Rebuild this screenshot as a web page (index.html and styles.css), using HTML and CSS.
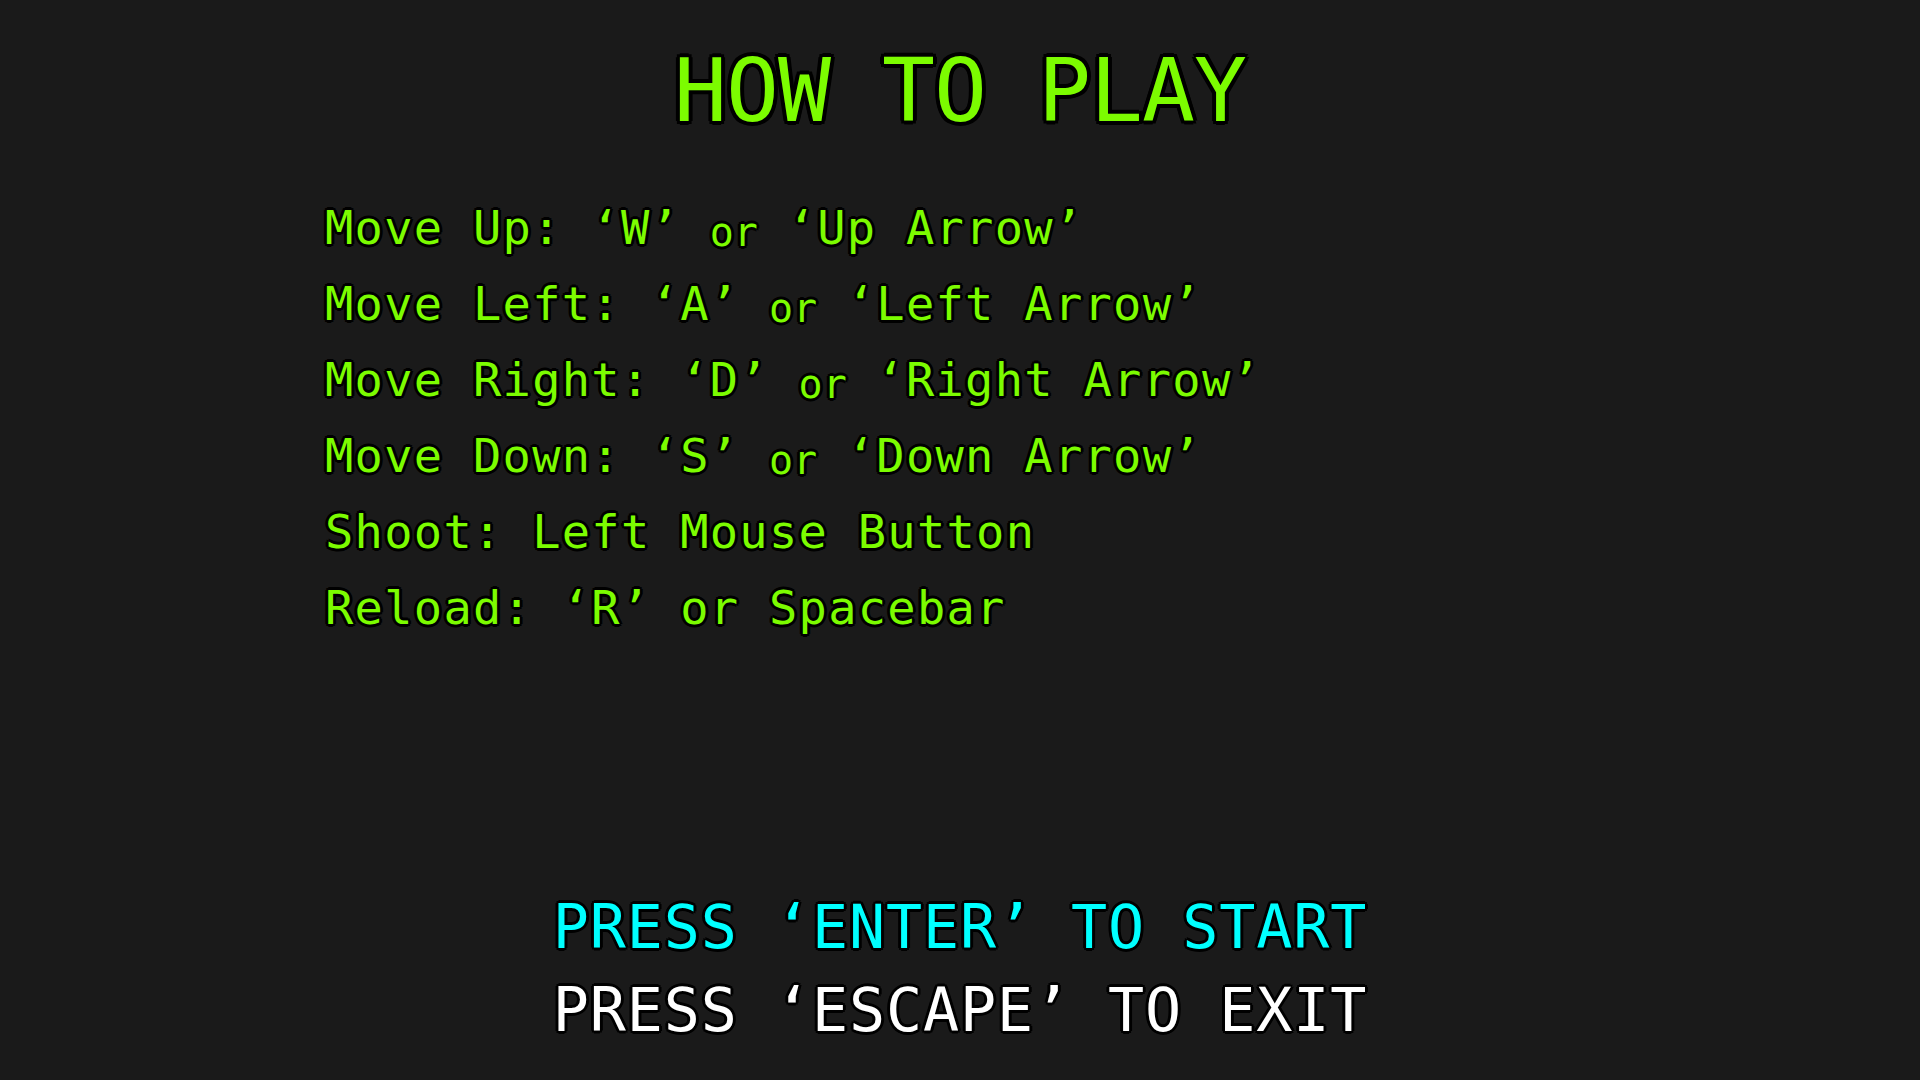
FILE: index.html
```html
<!DOCTYPE html>
<html lang="en">
<head>
<meta charset="utf-8">
<title>How to Play</title>
<link rel="stylesheet" href="styles.css">
</head>
<body>
<main class="screen">
  <h1 class="title">HOW TO PLAY</h1>
  <ul class="controls">
    <li>Move Up: ‘W’ <span class="or">or</span> ‘Up Arrow’</li>
    <li>Move Left: ‘A’ <span class="or">or</span> ‘Left Arrow’</li>
    <li>Move Right: ‘D’ <span class="or">or</span> ‘Right Arrow’</li>
    <li>Move Down: ‘S’ <span class="or">or</span> ‘Down Arrow’</li>
    <li>Shoot: Left Mouse Button</li>
    <li>Reload: ‘R’ or Spacebar</li>
  </ul>
  <div class="prompts">
    <p class="prompt start">PRESS ‘ENTER’ TO START</p>
    <p class="prompt exit">PRESS ‘ESCAPE’ TO EXIT</p>
  </div>
</main>
</body>
</html>
```
FILE: styles.css
```css
html, body {
  margin: 0;
  padding: 0;
  background: #1a1a1a;
}
.screen {
  height: 100vh;
  display: flex;
  flex-direction: column;
  box-sizing: border-box;
  padding-top: 47px;
  padding-bottom: 28px;
  font-family: "DejaVu Sans Mono", "Liberation Mono", monospace;
}
.title {
  margin: 0;
  text-align: center;
  font-size: 88px;
  line-height: 88px;
  font-weight: normal;
  letter-spacing: -1px;
  color: #7cfc00;
  text-shadow: 4px 0 #000, -4px 0 #000, 0 4px #000, 0 -4px #000,
    3px 3px #000, -3px 3px #000, 3px -3px #000, -3px -3px #000;
}
.controls {
  list-style: none;
  margin: 55px 0 0 0;
  padding: 0 0 0 325px;
}
.controls li {
  font-size: 47px;
  line-height: 76px;
  letter-spacing: 1.3px;
  color: #7cfc00;
  white-space: pre;
  text-shadow: 3px 0 #000, -3px 0 #000, 0 3px #000, 0 -3px #000,
    2px 2px #000, -2px 2px #000, 2px -2px #000, -2px -2px #000;
}
.or {
  font-size: 40px;
  line-height: 0;
  letter-spacing: 0;
  position: relative;
  top: 2px;
}
.prompts {
  margin-top: auto;
  text-align: center;
}
.prompt {
  margin: 0;
  font-size: 60px;
  line-height: 83px;
  letter-spacing: 0.9px;
  white-space: pre;
  text-shadow: 3px 0 #000, -3px 0 #000, 0 3px #000, 0 -3px #000,
    2px 2px #000, -2px 2px #000, 2px -2px #000, -2px -2px #000;
}
.start { color: #00ffff; }
.exit { color: #ffffff; }
```
